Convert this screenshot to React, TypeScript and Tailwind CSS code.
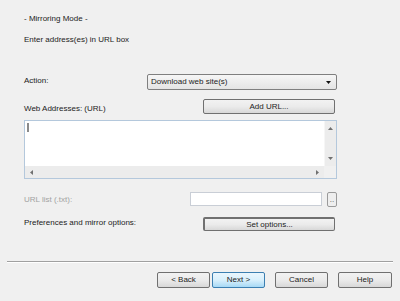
import React from "react";

const btn =
  "flex items-center justify-center rounded-[2px] border border-[#707070] bg-gradient-to-b from-[#f2f2f2] via-[#ebebeb] to-[#d8d8d8] text-[#222]";

export default function App() {
  return (
    <div
      className="w-[400px] h-[301px] bg-[#f0f0f0] text-[8px] text-[#222] overflow-hidden flex flex-col"
      style={{ fontFamily: '"Liberation Sans", Arial, sans-serif' }}
    >
      <div className="pl-[24px] pr-[63px] flex flex-col">
        <div className="mt-[14px] h-[10px] leading-[10px]">- Mirroring Mode -</div>
        <div className="mt-[11px] h-[10px] leading-[10px]">Enter address(es) in URL box</div>

        {/* Action row */}
        <div className="mt-[29px] h-[16px] flex items-center justify-between">
          <span className="leading-[10px] -mt-[2px]">Action:</span>
          <div className="w-[190px] h-[16px] rounded-[2px] border border-[#7f7f7f] bg-gradient-to-b from-[#f6f6f6] to-[#e4e4e4] flex items-center pl-[3px] pr-[5px]">
            <span className="flex-1 leading-[10px]">Download web site(s)</span>
            <svg width="5" height="3" viewBox="0 0 5 3">
              <path d="M0 0h5L2.5 3z" fill="#111" />
            </svg>
          </div>
        </div>

        {/* Web addresses row */}
        <div className="mt-[9px] h-[15px] flex items-center justify-between">
          <span className="leading-[10px] mt-[5px]">Web Addresses: (URL)</span>
          <div className={`${btn} w-[132px] h-[15px] mr-[2px]`}>Add URL...</div>
        </div>

        {/* Text area */}
        <div className="mt-[6px] h-[59px] border border-[#b4c8dc] bg-white flex flex-col">
          <div className="flex-1 flex">
            <div className="flex-1 relative">
              <div className="absolute left-[2px] top-[2px] w-[2px] h-[9px] bg-[#8a8a8a]" />
            </div>
            <div className="w-[12px] bg-[#ececec] border-l border-[#f6f6f6] flex flex-col items-center justify-between py-[6px]">
              <svg width="5" height="3" viewBox="0 0 5 3">
                <path d="M0 3h5L2.5 0z" fill="#707070" />
              </svg>
              <svg width="5" height="3" viewBox="0 0 5 3">
                <path d="M0 0h5L2.5 3z" fill="#707070" />
              </svg>
            </div>
          </div>
          <div className="h-[12px] flex">
            <div className="flex-1 bg-[#ececec] flex items-center justify-between px-[5px]">
              <svg width="3" height="5" viewBox="0 0 3 5">
                <path d="M3 0v5L0 2.5z" fill="#707070" />
              </svg>
              <svg width="3" height="5" viewBox="0 0 3 5">
                <path d="M0 0v5L3 2.5z" fill="#707070" />
              </svg>
            </div>
            <div className="w-[12px] bg-[#f0f0f0]" />
          </div>
        </div>

        {/* URL list row */}
        <div className="mt-[13px] h-[15px] flex items-start">
          <span className="leading-[10px] mt-[3px] text-[#a2a2a2] flex-1">URL list (.txt):</span>
          <div className="w-[132px] h-[14px] border border-[#c9ced6] bg-white" />
          <div className="ml-[5px] w-[10px] h-[15px] rounded-[2px] border border-[#9a9a9a] bg-[#eeeeee] flex items-end justify-center text-[#555] leading-[8px] pb-[2px]">
            ..
          </div>
        </div>

        {/* Preferences row */}
        <div className="mt-[10px] h-[14px] flex items-center justify-between">
          <span className="leading-[10px] -mt-[2px]">Preferences and mirror options:</span>
          <div className={`${btn} w-[132px] h-[14px] mr-[2px] border-[#5a5a5a] border-t-2 border-l-2`}>
            Set options...
          </div>
        </div>
      </div>

      {/* separator */}
      <div className="mt-[30px] mx-[7px] h-[2px] border-t border-[#a0a0a0] border-b border-b-white" />

      {/* bottom buttons */}
      <div className="mt-[9px] flex pl-[157px]">
        <div className={`${btn} w-[53px] h-[16px]`}>&lt; Back</div>
        <div className="ml-[2px] w-[53px] h-[16px] rounded-[2px] border border-[#3c7fb1] bg-gradient-to-b from-[#eaf6fd] via-[#d9f0fc] to-[#a7d9f5] flex items-center justify-center text-[#222]">
          Next &gt;
        </div>
        <div className={`${btn} ml-[10px] w-[53px] h-[16px]`}>Cancel</div>
        <div className={`${btn} ml-[10px] w-[54px] h-[16px]`}>Help</div>
      </div>
    </div>
  );
}
